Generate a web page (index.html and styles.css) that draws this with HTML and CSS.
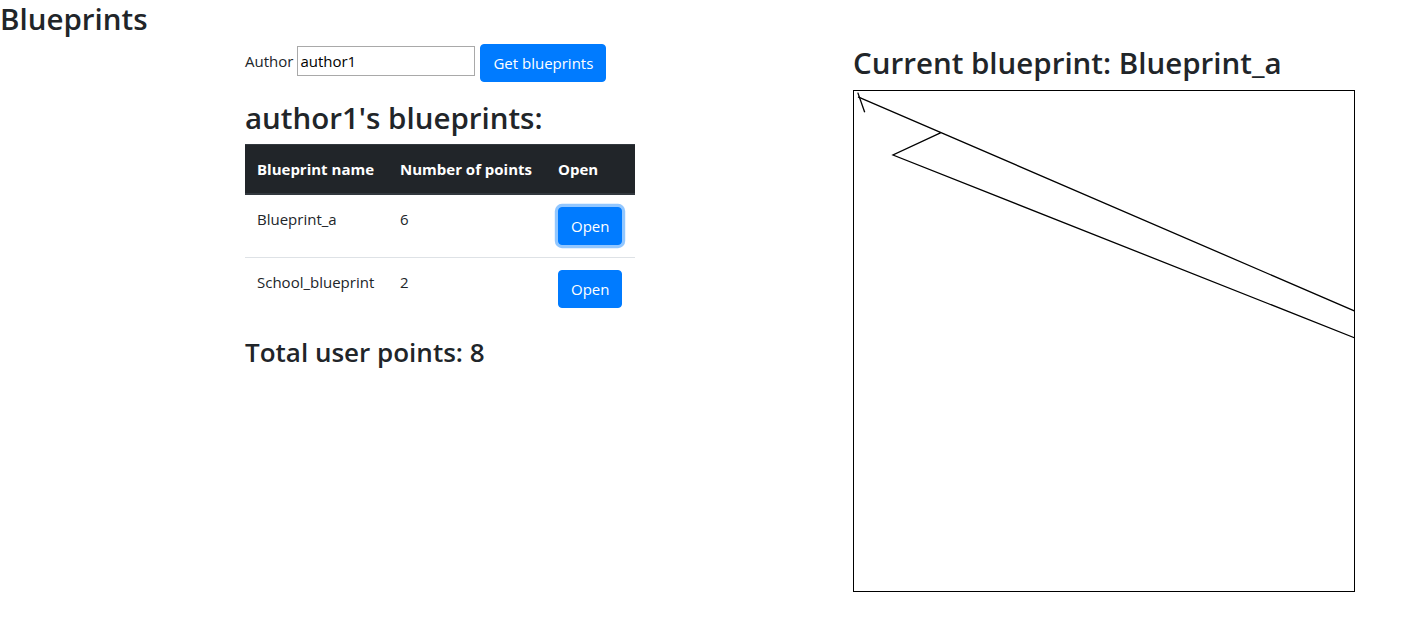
FILE: index.html
```html
<!DOCTYPE html>
<html lang="en">
<head>
<meta charset="utf-8">
<title>Blueprints</title>
<link rel="stylesheet" href="styles.css">
</head>
<body>
<h2 class="page-title">Blueprints</h2>
<div class="main">
  <section class="left">
    <div class="author-form">
      <label class="author-label" for="author">Author</label>
      <input class="author-input" id="author" type="text" value="author1">
      <button class="btn" type="button">Get blueprints</button>
    </div>
    <h2 class="heading list-heading">author1's blueprints:</h2>
    <table class="bp-table">
      <thead>
        <tr>
          <th class="col-name">Blueprint name</th>
          <th class="col-points">Number of points</th>
          <th class="col-open">Open</th>
        </tr>
      </thead>
      <tbody>
        <tr>
          <td>Blueprint_a</td>
          <td>6</td>
          <td><button class="btn btn-focus" type="button">Open</button></td>
        </tr>
        <tr>
          <td>School_blueprint</td>
          <td>2</td>
          <td><button class="btn" type="button">Open</button></td>
        </tr>
      </tbody>
    </table>
    <h3 class="total">Total user points: 8</h3>
  </section>
  <section class="right">
    <h2 class="heading current-heading">Current blueprint: Blueprint_a</h2>
    <div class="canvas">
      <svg width="500" height="500" viewBox="0 0 500 500">
        <path class="stroke" d="M3.8 1.6 L10.7 21.3"/>
        <path class="stroke" d="M4 5.8 L700 306 M87 41.6 L39 64 L700 325.8"/>
      </svg>
    </div>
  </section>
</div>
</body>
</html>
```

FILE: styles.css
```css
* {
  box-sizing: border-box;
}

body {
  margin: 0;
  font-family: "Open Sans", "Noto Sans", sans-serif;
  font-size: 15px;
  line-height: 24px;
  color: #212529;
  background: #fff;
}

.page-title {
  margin: 0;
  font-size: 29.5px;
  line-height: 38px;
  font-weight: 600;
}

.main {
  display: flex;
  margin-top: 5px;
  padding-left: 245px;
}

.left {
  width: 608px;
  flex: none;
}

.right {
  flex: none;
}

.author-form {
  display: flex;
  align-items: flex-start;
  height: 38px;
  margin-top: 1px;
}

.author-label {
  margin-top: 5px;
}

.author-input {
  width: 178px;
  height: 30px;
  margin: 2px 5px 0 4px;
  padding: 1px 2px;
  border: 1px solid #a9a9a9;
  border-radius: 0;
  font-family: inherit;
  font-size: 15px;
  line-height: 24px;
  color: #000;
}

.btn {
  display: inline-block;
  padding: 6px 12px;
  border: 1px solid #007bff;
  border-radius: 4px;
  background: #007bff;
  color: #fff;
  font-family: inherit;
  font-size: 15px;
  line-height: 24px;
  font-weight: 400;
  white-space: nowrap;
  cursor: pointer;
}

.btn-focus {
  box-shadow: 0 0 0 3.2px rgba(38, 143, 255, 0.5);
}

.heading {
  margin: 0;
  font-size: 29.5px;
  line-height: 38.4px;
  font-weight: 600;
}

.list-heading {
  margin-top: 17px;
  margin-bottom: 6.6px;
}

.bp-table {
  width: 390px;
  table-layout: fixed;
  border-collapse: collapse;
}

.bp-table th,
.bp-table td {
  padding: 12px;
  text-align: left;
  white-space: nowrap;
}

.bp-table th {
  background: #212529;
  color: #fff;
  font-weight: 700;
  vertical-align: bottom;
  border-top: 1px solid #32383e;
  border-bottom: 2px solid #32383e;
}

.bp-table td {
  vertical-align: top;
}

.bp-table tbody tr + tr td {
  border-top: 1px solid #dee2e6;
}

.col-name {
  width: 143px;
}

.col-points {
  width: 158px;
}

.col-open {
  width: 89px;
}

.total {
  margin: 16px 0 0;
  font-size: 26px;
  line-height: 33.6px;
  font-weight: 600;
}

.current-heading {
  margin-top: 1.2px;
  margin-bottom: 7.4px;
}

.canvas {
  width: 502px;
  height: 502px;
  border: 1px solid #000;
  overflow: hidden;
}

.canvas svg {
  display: block;
}

.stroke {
  fill: none;
  stroke: #000;
  stroke-width: 1.3;
}
```
